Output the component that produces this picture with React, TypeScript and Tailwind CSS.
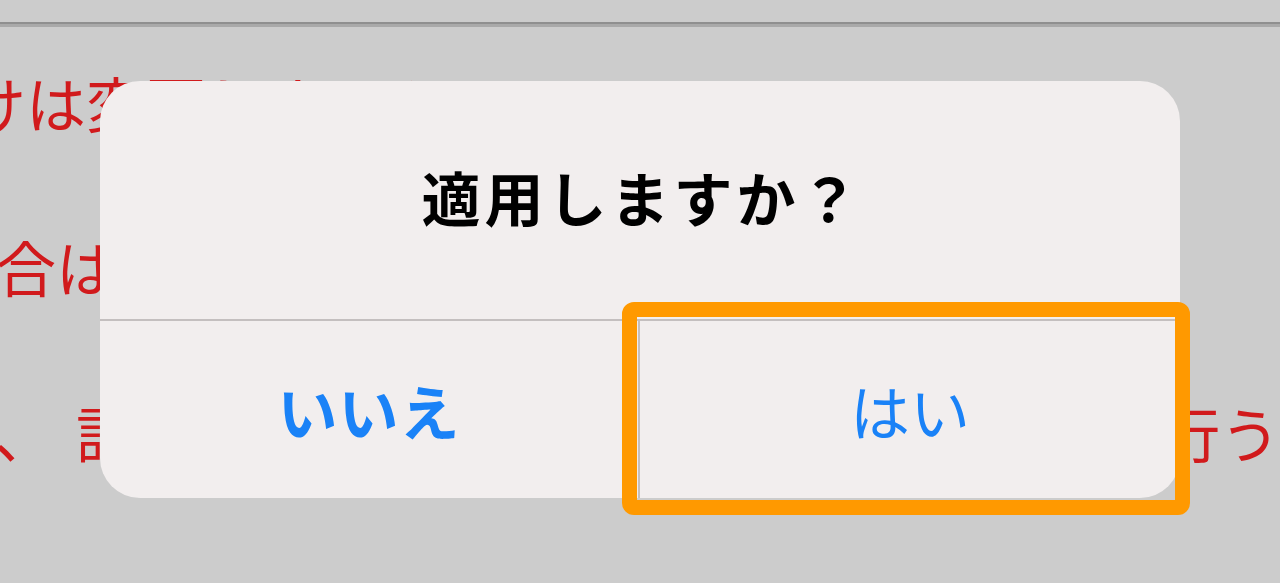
const jp = { fontFamily: '"Noto Sans CJK JP", "Noto Sans", sans-serif' };

export default function App() {
    return (
        <div
            className="relative w-[1280px] h-[583px] overflow-hidden bg-[#cccccc]"
            style={jp}
        >
            {/* header edge */}
            <div className="h-[22px]" />
            <div className="h-[2px] bg-[#8f8f8f]" />
            <div className="h-[3px] bg-[#a9a9a9]" />

            {/* notes behind the alert */}
            <div className="text-[#d11a1c] text-[60px] leading-[60px] whitespace-nowrap">
                <div className="mt-[45px] ml-[-34px]">けは変更しません</div>
                <div className="mt-[104px] ml-[-4px]">合は、現在の設定のまま</div>
                <div className="mt-[106px] ml-[-6px] flex">
                    <span>、</span>
                    <span className="ml-[22px]">訂正の内容を確認してから設定の変更を</span>
                    <span className="ml-[6px]">行う</span>
                </div>
            </div>

            {/* alert */}
            <div className="absolute left-[100px] top-[81px] w-[1080px] h-[417px] rounded-[40px] bg-[#f2eeee] flex flex-col overflow-hidden">
                <div className="h-[240px] flex items-center justify-center border-b-[2px] border-[#c4bfbf]">
                    <span className="text-[59px] font-bold text-black tracking-[4px] pb-[6px] pl-[4px]">
                        適用しますか？
                    </span>
                </div>
                <div className="flex-1 grid grid-cols-2">
                    <button className="flex items-center justify-center border-r-[2px] border-[#c4bfbf] text-[#1a82f7] text-[60px] font-bold tracking-[1px]">
                        いいえ
                    </button>
                    <button className="flex items-center justify-center text-[#1a82f7] text-[60px] font-normal">
                        はい
                    </button>
                </div>
            </div>

            {/* highlight */}
            <div className="absolute left-[622px] top-[302px] w-[568px] h-[213px] rounded-[12px] border-[15px] border-[#ff9900]" />
        </div>
    );
}
